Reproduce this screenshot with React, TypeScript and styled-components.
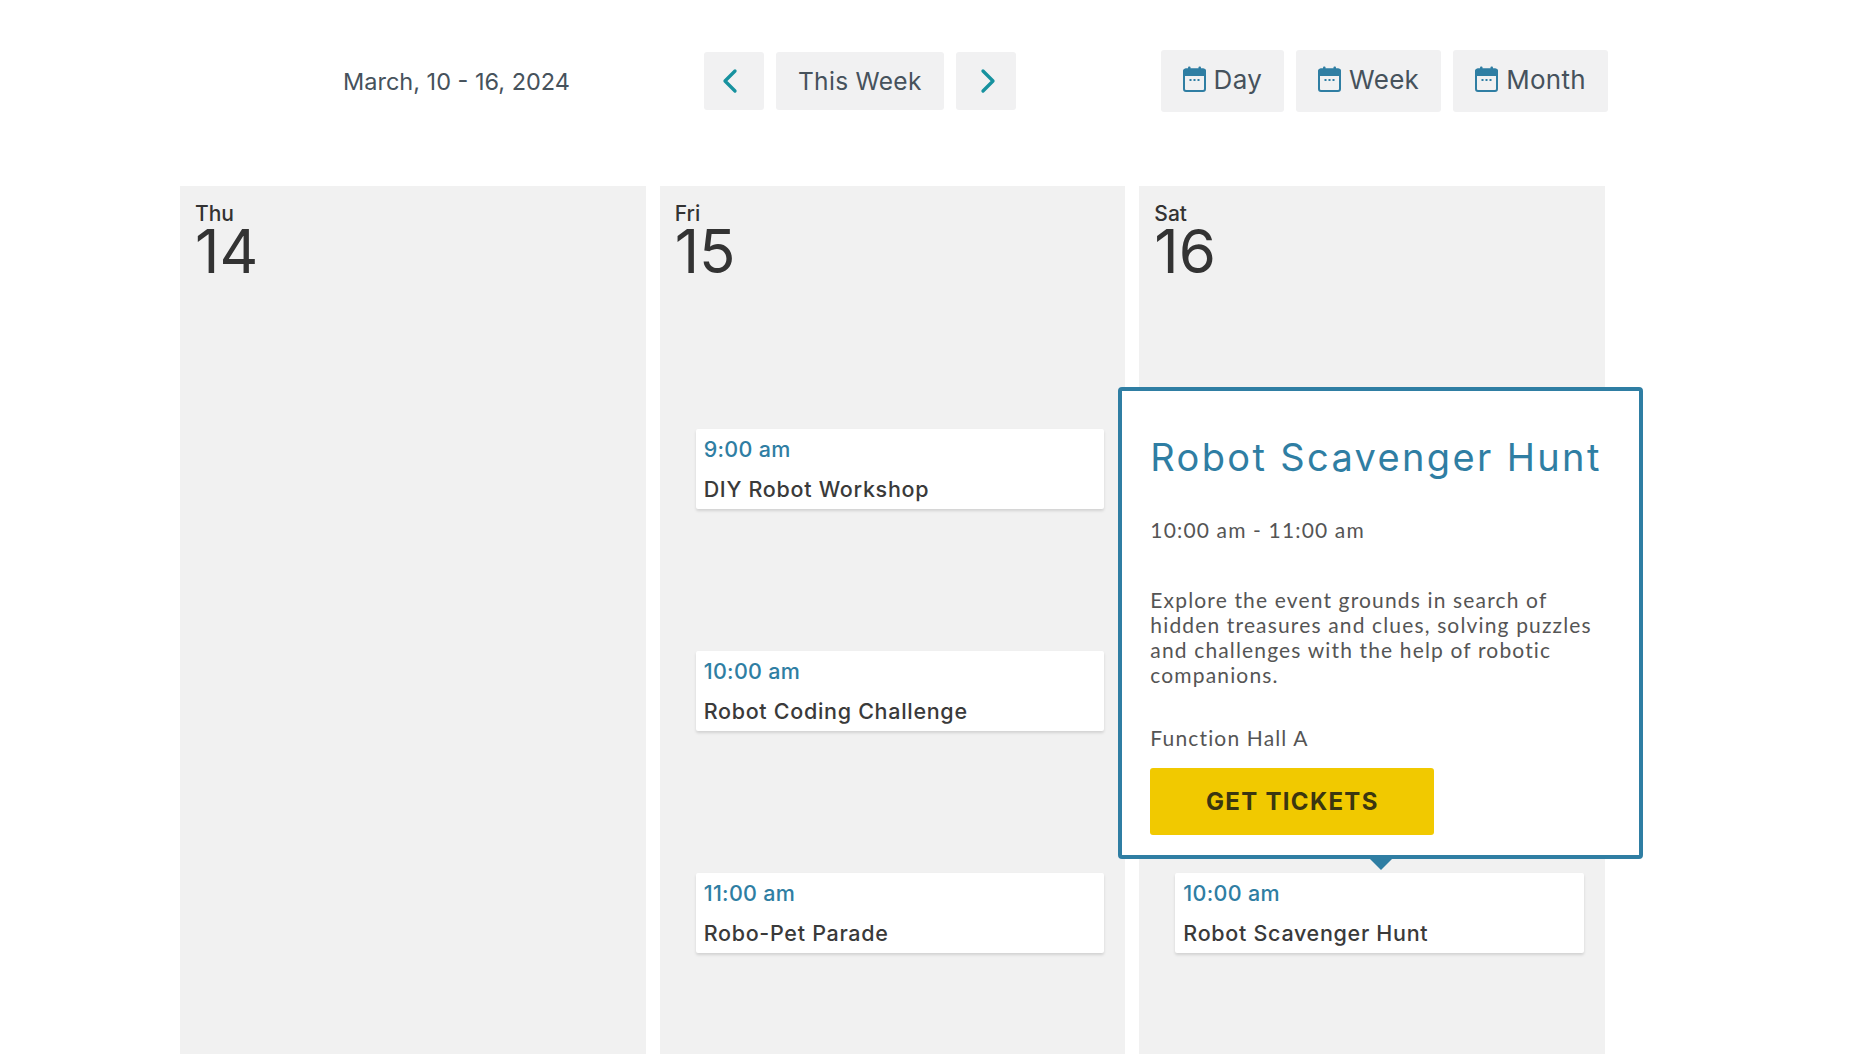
import React from 'react';
import styled, { createGlobalStyle } from 'styled-components';
import { ChevronLeft, ChevronRight } from 'lucide-react';

const BLUE = '#2f7ea3';
const TEAL = '#17929f';

const GlobalStyle = createGlobalStyle`
  html, body {
    margin: 0;
    height: 100%;
    overflow: hidden;
    background: #fff;
    font-family: Inter, "Liberation Sans", sans-serif;
  }
  #root {
    height: 100%;
  }
`;

const Page = styled.div`
  height: 1054px;
  padding: 50px 270px 0 180px;
  box-sizing: border-box;
  overflow: hidden;
  display: flex;
  flex-direction: column;
`;

const Toolbar = styled.div`
  display: flex;
  align-items: center;
  height: 62px;
  margin: 0 -3px 74px 0;
`;

const DateRange = styled.div`
  width: 361px;
  margin-left: 163px;
  font-size: 23.5px;
  letter-spacing: 0;
  color: #46525c;
`;

const NavGroup = styled.div`
  display: flex;
  gap: 12px;
`;

const ViewGroup = styled.div`
  display: flex;
  gap: 12px;
  margin-left: auto;
`;

const ToolButton = styled.button<{ $tall?: boolean }>`
  display: flex;
  align-items: center;
  justify-content: center;
  gap: 8px;
  height: ${(p) => (p.$tall ? '62px' : '58px')};
  padding: ${(p) => (p.$tall ? '0 22px 4px' : '0 22px')};
  border: 0;
  border-radius: 3px;
  background: #f1f1f2;
  color: #46525c;
  font-family: inherit;
  font-size: ${(p) => (p.$tall ? '26px' : '24.5px')};
  letter-spacing: 0.3px;
`;

const ArrowButton = styled(ToolButton)<{ $dir: 'prev' | 'next' }>`
  width: 60px;
  padding: ${(p) => (p.$dir === 'prev' ? '0 8px 0 0' : '0 0 0 4px')};
  color: ${TEAL};
`;

const Week = styled.div`
  flex: 1;
  display: grid;
  grid-template-columns: repeat(3, 1fr);
  gap: 14px;
`;

const DayColumn = styled.section`
  position: relative;
  background: #f1f1f1;
`;

const DayHeader = styled.header`
  height: 243px;
  padding: 17px 0 0 15px;
  box-sizing: border-box;
  color: #333;
`;

const DayName = styled.div`
  font-size: 21px;
  font-weight: 500;
  line-height: 21px;
`;

const DayNumber = styled.div`
  font-size: 60px;
  font-weight: 400;
  line-height: 54px;
`;

const Slots = styled.div`
  display: grid;
  grid-auto-rows: 222px;
  padding: 0 21px 0 36px;
`;

const EventCard = styled.article<{ $slot: number }>`
  grid-row: ${(p) => p.$slot};
  height: 80px;
  padding: 8px 8px 0;
  box-sizing: border-box;
  background: #fff;
  border-radius: 2px;
  box-shadow: 0 2px 3px rgba(0, 0, 0, 0.13);
`;

const EventTime = styled.div`
  font-size: 21.5px;
  font-weight: 500;
  line-height: 24px;
  letter-spacing: 0.3px;
  color: ${BLUE};
`;

const EventTitle = styled.div`
  margin-top: 16px;
  font-size: 21.5px;
  font-weight: 500;
  line-height: 24px;
  letter-spacing: 0.7px;
  color: #3a3a3a;
`;

const Popover = styled.aside`
  position: absolute;
  top: 201px;
  left: -21px;
  width: 525px;
  height: 472px;
  padding: 44px 28px 0;
  box-sizing: border-box;
  background: #fff;
  border: 4px solid ${BLUE};
  border-radius: 4px;

  &::after {
    content: '';
    position: absolute;
    left: 50%;
    bottom: -15px;
    margin-left: -11px;
    border-style: solid;
    border-width: 11px 11px 0;
    border-color: ${BLUE} transparent transparent;
  }
`;

const PopoverTitle = styled.h2`
  margin: 0;
  font-size: 38px;
  font-weight: 400;
  line-height: 44px;
  letter-spacing: 2.35px;
  white-space: nowrap;
  color: ${BLUE};
`;

const PopoverText = styled.p<{ $gap: number }>`
  max-width: 450px;
  margin: ${(p) => p.$gap}px 0 0;
  font-family: Lato, "Liberation Sans", sans-serif;
  font-size: 21px;
  line-height: 25px;
  letter-spacing: 1.15px;
  color: #555;
`;

const TicketButton = styled.button`
  display: block;
  width: 284px;
  height: 67px;
  margin-top: 18px;
  border: 0;
  border-radius: 3px;
  background: #f1c900;
  color: #3b3610;
  font-family: inherit;
  font-size: 24px;
  font-weight: 700;
  letter-spacing: 1.3px;
`;

function CalendarIcon() {
  return (
    <svg width="23" height="26" viewBox="0 0 23 26" fill="none">
      <rect x="1" y="3.5" width="21" height="21.5" rx="2" stroke={BLUE} strokeWidth="2" />
      <path d="M1 9V5.5a2 2 0 0 1 2-2h17a2 2 0 0 1 2 2V9z" fill={BLUE} stroke={BLUE} strokeWidth="2" />
      <rect x="5" y="0.5" width="2.5" height="5" rx="1" fill={BLUE} />
      <rect x="15.5" y="0.5" width="2.5" height="5" rx="1" fill={BLUE} />
      <rect x="6.5" y="13" width="2" height="2" fill={BLUE} />
      <rect x="10.5" y="13" width="2" height="2" fill={BLUE} />
      <rect x="14.5" y="13" width="2" height="2" fill={BLUE} />
    </svg>
  );
}

function App() {
  return (
    <Page>
      <GlobalStyle />
      <Toolbar>
        <DateRange>March, 10 - 16, 2024</DateRange>
        <NavGroup>
          <ArrowButton $dir="prev" aria-label="Previous week">
            <ChevronLeft size={40} strokeWidth={2} />
          </ArrowButton>
          <ToolButton>This Week</ToolButton>
          <ArrowButton $dir="next" aria-label="Next week">
            <ChevronRight size={40} strokeWidth={2} />
          </ArrowButton>
        </NavGroup>
        <ViewGroup>
          <ToolButton $tall>
            <CalendarIcon />
            Day
          </ToolButton>
          <ToolButton $tall>
            <CalendarIcon />
            Week
          </ToolButton>
          <ToolButton $tall>
            <CalendarIcon />
            Month
          </ToolButton>
        </ViewGroup>
      </Toolbar>

      <Week>
        <DayColumn>
          <DayHeader>
            <DayName>Thu</DayName>
            <DayNumber>14</DayNumber>
          </DayHeader>
        </DayColumn>

        <DayColumn>
          <DayHeader>
            <DayName>Fri</DayName>
            <DayNumber>15</DayNumber>
          </DayHeader>
          <Slots>
            <EventCard $slot={1}>
              <EventTime>9:00 am</EventTime>
              <EventTitle>DIY Robot Workshop</EventTitle>
            </EventCard>
            <EventCard $slot={2}>
              <EventTime>10:00 am</EventTime>
              <EventTitle>Robot Coding Challenge</EventTitle>
            </EventCard>
            <EventCard $slot={3}>
              <EventTime>11:00 am</EventTime>
              <EventTitle>Robo-Pet Parade</EventTitle>
            </EventCard>
          </Slots>
        </DayColumn>

        <DayColumn>
          <DayHeader>
            <DayName>Sat</DayName>
            <DayNumber>16</DayNumber>
          </DayHeader>
          <Slots>
            <EventCard $slot={3}>
              <EventTime>10:00 am</EventTime>
              <EventTitle>Robot Scavenger Hunt</EventTitle>
            </EventCard>
          </Slots>
          <Popover>
            <PopoverTitle>Robot Scavenger Hunt</PopoverTitle>
            <PopoverText $gap={38}>10:00 am - 11:00 am</PopoverText>
            <PopoverText $gap={45}>
              Explore the event grounds in search of hidden treasures and clues, solving puzzles and challenges with the help of robotic companions.
            </PopoverText>
            <PopoverText $gap={38}>Function Hall A</PopoverText>
            <TicketButton>GET TICKETS</TicketButton>
          </Popover>
        </DayColumn>
      </Week>
    </Page>
  );
}

export default App;
